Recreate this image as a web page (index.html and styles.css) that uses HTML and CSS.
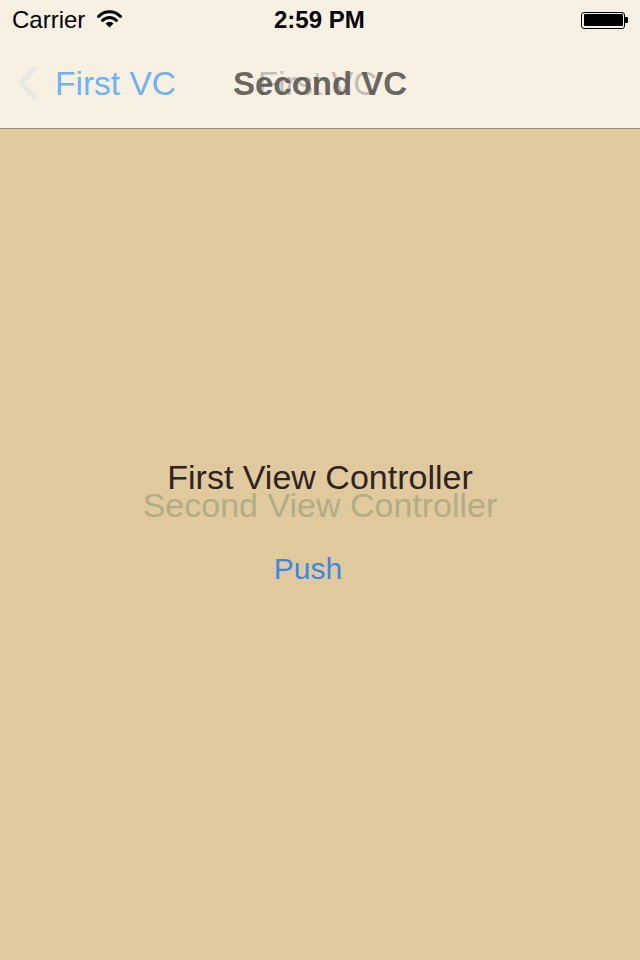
FILE: index.html
```html
<!DOCTYPE html>
<html>
<head>
<meta charset="utf-8">
<link rel="stylesheet" href="styles.css">
</head>
<body>
<header class="top">
  <div class="status">
    <div class="status-left">
      <span class="carrier">Carrier</span>
      <svg class="wifi" width="25" height="18" viewBox="0 0 25 18">
        <path d="M1.5 6.5 A15 15 0 0 1 23.5 6.5" fill="none" stroke="#000" stroke-width="3" stroke-linecap="round"/>
        <path d="M5.5 10.5 A9.5 9.5 0 0 1 19.5 10.5" fill="none" stroke="#000" stroke-width="3" stroke-linecap="round"/>
        <path d="M8.5 13.5 L12.5 17.5 L16.5 13.5 A5.5 5.5 0 0 0 8.5 13.5 Z" fill="#000"/>
      </svg>
    </div>
    <span class="time">2:59 PM</span>
    <div class="battery"><span class="battery-body"><span class="battery-fill"></span></span><span class="battery-nub"></span></div>
  </div>
  <nav class="navbar">
    <div class="back">
      <svg class="chevron" width="24" height="38" viewBox="0 0 24 38">
        <path d="M20 3 L5 19 L20 35" fill="none" stroke="#e9e7df" stroke-width="5" stroke-linejoin="miter"/>
      </svg>
      <span class="back-label">First VC</span>
    </div>
    <div class="title-old">First VC</div>
    <div class="title">Second VC</div>
  </nav>
</header>
<main class="content">
  <div class="labels">
    <p class="label first">First View Controller</p>
    <p class="label second">Second View Controller</p>
  </div>
  <span class="push">Push</span>
</main>
</body>
</html>
```
FILE: styles.css
```css
html, body {
  margin: 0;
  padding: 0;
}
body {
  width: 640px;
  height: 960px;
  background: #e0ca9d;
  font-family: "Liberation Sans", Arial, sans-serif;
  overflow: hidden;
}
.top {
  background: #f8f0e3;
  border-bottom: 1px solid #9b8b6e;
}
.status {
  height: 40px;
  display: flex;
  align-items: center;
  justify-content: space-between;
  padding: 0 12px;
  position: relative;
}
.status-left {
  display: flex;
  align-items: center;
  gap: 12px;
}
.carrier {
  font-size: 24px;
  color: #000;
  line-height: 40px;
}
.wifi {
  margin-top: -2px;
}
.time {
  position: absolute;
  left: 274px;
  top: 0;
  font-size: 24px;
  font-weight: bold;
  line-height: 40px;
  color: #000;
}
.battery {
  display: flex;
  align-items: center;
}
.battery-body {
  width: 44px;
  height: 17px;
  border: 1.5px solid #000;
  border-radius: 3px;
  box-sizing: border-box;
  padding: 1.5px;
  display: flex;
}
.battery-fill {
  flex: 1;
  background: #000;
  border-radius: 1px;
}
.battery-nub {
  width: 3px;
  height: 6px;
  background: #000;
  border-radius: 0 1px 1px 0;
}
.navbar {
  height: 88px;
  position: relative;
}
.back {
  display: flex;
  align-items: center;
  height: 88px;
  padding-left: 16px;
  gap: 15px;
}
.chevron {
  margin-top: -3px;
}
.back-label {
  font-size: 33.5px;
  color: #6fb3f4;
  line-height: 88px;
}
.title, .title-old {
  position: absolute;
  top: 0;
  line-height: 88px;
  font-size: 33px;
}
.title-old {
  left: 258px;
  color: #c3beb5;
}
.title {
  left: 233px;
  font-weight: bold;
  color: rgba(80, 78, 74, 0.85);
}
.content {
  display: flex;
  flex-direction: column;
  align-items: center;
  padding-top: 334px;
}
.labels {
  display: flex;
  flex-direction: column;
  align-items: center;
}
.label {
  margin: 0;
  font-size: 34px;
  line-height: 28px;
  white-space: nowrap;
}
.first {
  color: #2f2323;
}
.second {
  color: #b1ad84;
}
.push {
  margin-top: 32px;
  margin-right: 24px;
  font-size: 30px;
  line-height: 36px;
  color: #3b87e6;
}
```
